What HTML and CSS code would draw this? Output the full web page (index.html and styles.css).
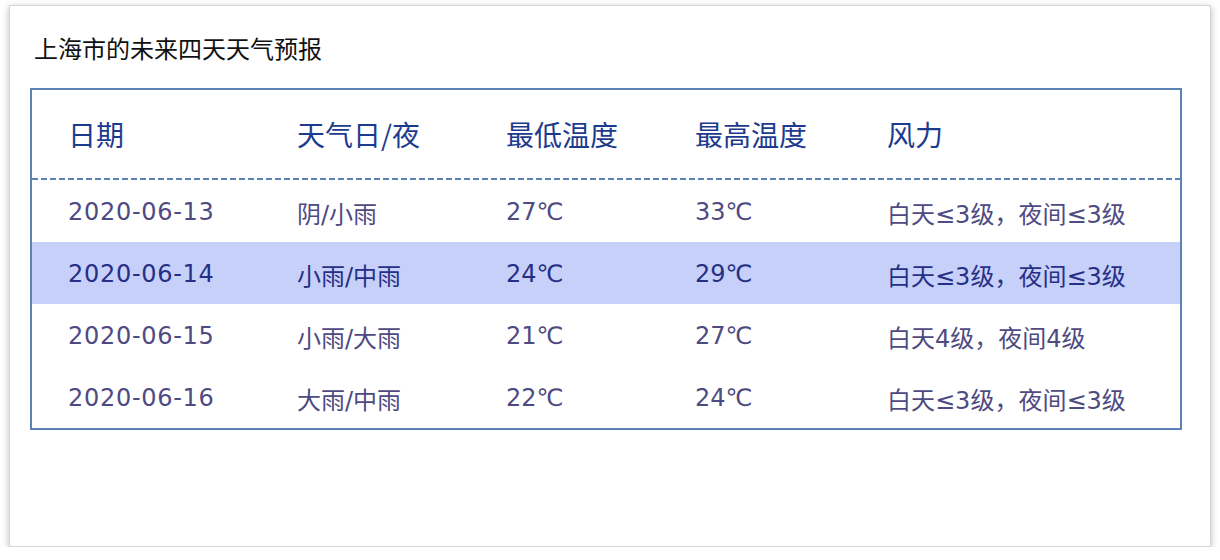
FILE: index.html
```html
<!DOCTYPE html>
<html lang="zh">
<head>
<meta charset="utf-8">
<title>上海市的未来四天天气预报</title>
<link rel="stylesheet" href="styles.css">
</head>
<body>
<div class="card">
  <div class="title">上海市的未来四天天气预报</div>
  <div class="table">
    <div class="row head">
      <div class="c c1">日期</div>
      <div class="c c2">天气日/夜</div>
      <div class="c c3">最低温度</div>
      <div class="c c4">最高温度</div>
      <div class="c c5">风力</div>
    </div>
    <div class="row">
      <div class="c c1 date">2020-06-13</div>
      <div class="c c2">阴/小雨</div>
      <div class="c c3">27℃</div>
      <div class="c c4">33℃</div>
      <div class="c c5">白天≤3级，夜间≤3级</div>
    </div>
    <div class="row hl">
      <div class="c c1 date">2020-06-14</div>
      <div class="c c2">小雨/中雨</div>
      <div class="c c3">24℃</div>
      <div class="c c4">29℃</div>
      <div class="c c5">白天≤3级，夜间≤3级</div>
    </div>
    <div class="row">
      <div class="c c1 date">2020-06-15</div>
      <div class="c c2">小雨/大雨</div>
      <div class="c c3">21℃</div>
      <div class="c c4">27℃</div>
      <div class="c c5">白天4级，夜间4级</div>
    </div>
    <div class="row">
      <div class="c c1 date">2020-06-16</div>
      <div class="c c2">大雨/中雨</div>
      <div class="c c3">22℃</div>
      <div class="c c4">24℃</div>
      <div class="c c5">白天≤3级，夜间≤3级</div>
    </div>
  </div>
</div>
</body>
</html>
```
FILE: styles.css
```css
html, body {
  margin: 0;
  padding: 0;
  background: #ffffff;
}
body {
  font-family: "Noto Sans CJK SC", "Noto Sans", sans-serif;
}
.card {
  box-sizing: border-box;
  margin: 5px 0 0 9px;
  width: 1202px;
  height: 542px;
  border: 1px solid #d6d6d6;
  box-shadow: 0 2px 7px rgba(0, 0, 0, 0.28);
  background: #fff;
  padding: 28px 0 0 20px;
}
.title {
  padding-left: 4px;
  font-size: 24px;
  line-height: 28px;
  height: 28px;
  color: #111;
  margin-bottom: 26px;
}
.table {
  box-sizing: border-box;
  width: 1152px;
  border: 2px solid #5b83b6;
}
.row {
  display: flex;
  align-items: center;
  height: 62px;
  font-family: "DejaVu Sans", "Noto Sans CJK SC", sans-serif;
  font-size: 24px;
  color: #4e4a82;
}
.row.head {
  height: 88px;
  font-family: "Noto Sans CJK SC", sans-serif;
  font-size: 28px;
  color: #1d3b8e;
  position: relative;
}
.row.head::after {
  content: "";
  position: absolute;
  left: 0;
  right: 0;
  bottom: -2px;
  height: 2px;
  background: repeating-linear-gradient(90deg, #5b83b6 0 6px, transparent 6px 9px);
}
.row.head + .row {
  margin-top: 2px;
}
.row.hl {
  background: #c6d0f8;
  color: #262f86;
}
.c {
  box-sizing: border-box;
  padding-left: 36px;
  padding-top: 2px;
  white-space: nowrap;
}
.row.head .c {
  padding-top: 0;
}
.c.date {
  letter-spacing: 0.7px;
}
.c1 { width: 229px; }
.c2 { width: 209px; }
.c3 { width: 189px; }
.c4 { width: 192px; }
.c5 { flex: 1; }
```
